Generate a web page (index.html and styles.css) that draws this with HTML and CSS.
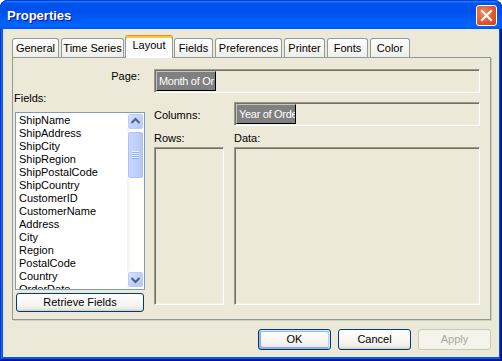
FILE: index.html
```html
<!DOCTYPE html>
<html>
<head>
<meta charset="utf-8">
<link rel="stylesheet" href="styles.css">
</head>
<body>
<div class="window">
  <div class="titlebar">
    <span class="title">Properties</span>
    <div class="close">
      <svg width="19" height="19" viewBox="0 0 19 19"><path d="M5 5 L14 14 M14 5 L5 14" stroke="#fff" stroke-width="2.2" stroke-linecap="square"/></svg>
    </div>
  </div>
  <div class="client">
    <div class="tabs">
      <div class="tab t-general">General</div>
      <div class="tab t-time">Time Series</div>
      <div class="tab sel t-layout">Layout</div>
      <div class="tab t-fields">Fields</div>
      <div class="tab t-pref">Preferences</div>
      <div class="tab t-printer">Printer</div>
      <div class="tab t-fonts">Fonts</div>
      <div class="tab t-color">Color</div>
    </div>
    <div class="panel">
      <div class="page-row">
        <span class="page-label">Page:</span>
        <div class="well page-well"><span class="chip">Month of Or</span></div>
      </div>
      <div class="main">
        <div class="left">
          <div class="fields-lbl">Fields:</div>
          <div class="listbox">
            <ul class="items">
              <li>ShipName</li>
              <li>ShipAddress</li>
              <li>ShipCity</li>
              <li>ShipRegion</li>
              <li>ShipPostalCode</li>
              <li>ShipCountry</li>
              <li>CustomerID</li>
              <li>CustomerName</li>
              <li>Address</li>
              <li>City</li>
              <li>Region</li>
              <li>PostalCode</li>
              <li>Country</li>
              <li>OrderDate</li>
            </ul>
            <div class="scrollbar">
              <div class="sb-btn">
                <svg width="15" height="15" viewBox="0 0 15 15"><path d="M3.5 9 L7.5 5 L11.5 9" fill="none" stroke="#4d6185" stroke-width="2"/></svg>
              </div>
              <div class="sb-thumb">
                <span class="grip"></span><span class="grip"></span><span class="grip"></span><span class="grip"></span>
              </div>
              <div class="sb-btn sb-down">
                <svg width="15" height="15" viewBox="0 0 15 15"><path d="M3.5 6 L7.5 10 L11.5 6" fill="none" stroke="#4d6185" stroke-width="2"/></svg>
              </div>
            </div>
          </div>
          <div class="btn retrieve">Retrieve Fields</div>
        </div>
        <div class="right">
          <div class="lbl col-lbl">Columns:</div>
          <div class="well col-well"><span class="chip">Year of Orde</span></div>
          <div class="lbl sub-lbl">Rows:</div>
          <div class="lbl sub-lbl">Data:</div>
          <div class="well box"></div>
          <div class="well box"></div>
        </div>
      </div>
    </div>
    <div class="buttons">
      <div class="btn dlg default">OK</div>
      <div class="btn dlg">Cancel</div>
      <div class="btn dlg disabled">Apply</div>
    </div>
  </div>
</div>
</body>
</html>
```
FILE: styles.css
```css
* { box-sizing: border-box; }
html, body { margin: 0; padding: 0; }
body {
  width: 502px;
  height: 361px;
  overflow: hidden;
  background: #ffffff;
  font-family: "Liberation Sans", Arial, sans-serif;
  font-size: 11px;
  color: #000;
}
.window {
  width: 502px;
  height: 361px;
  display: flex;
  flex-direction: column;
  background: #0058ee;
  border-radius: 8px 8px 0 0;
  box-shadow: inset -1px -1px #00138c, inset 1px 0 #0831d9, inset -2px -2px #001ea0, inset 2px 0 #166aee;
}
.titlebar {
  height: 29px;
  flex: none;
  display: flex;
  align-items: flex-start;
  justify-content: space-between;
  padding: 0 5px 0 7px;
  border-radius: 8px 8px 0 0;
  background: linear-gradient(180deg, #0997ff, #0053ee 8%, #0050ee 40%, #0062f8 80%, #0066ff 92%, #005bff 95%, #0050e6 100%);
  border-top: 1px solid #0831d9;
}
.title {
  margin-top: 7px;
  font-weight: bold;
  font-size: 13px;
  line-height: 16px;
  color: #fff;
  text-shadow: 1px 1px #0f1089;
}
.close {
  margin-top: 4px;
  width: 21px;
  height: 21px;
  border: 1px solid #fff;
  border-radius: 3px;
  background: radial-gradient(circle at 35% 35%, #ef8a64 0%, #e2582d 55%, #c8401a 100%);
  display: flex;
  align-items: center;
  justify-content: center;
}
.close svg { display: block; }
.client {
  flex: 1;
  margin: 0 3px 4px 3px;
  background: #ece9d8;
  display: flex;
  flex-direction: column;
}
.tabs {
  display: flex;
  align-items: flex-end;
  height: 22px;
  margin: 6px 0 0 9px;
  position: relative;
  z-index: 2;
}
.tab {
  height: 19px;
  margin-right: 2px;
  border: 1px solid #919b9c;
  border-bottom: none;
  border-radius: 3px 3px 0 0;
  background: linear-gradient(180deg, #fff, #fafaf9 26%, #f0f0ea 95%, #ecebe5);
  text-align: center;
  line-height: 18px;
  white-space: nowrap;
}
.tab.sel {
  height: 23px;
  margin: 0 1px -1px -1px;
  border-top: 1px solid #e68b2c;
  box-shadow: inset 0 2px #ffc83c;
  background: #fcfcfe;
  line-height: 18px;
}
.t-general { width: 47px; }
.t-time { width: 63px; }
.t-layout { width: 48px; }
.t-fields { width: 39px; }
.t-pref { width: 67px; }
.t-printer { width: 41px; }
.t-fonts { width: 41px; }
.t-color { width: 40px; }
.panel {
  height: 263px;
  margin: 0 8px 0 9px;
  border: 1px solid #919b9c;
  background: #ece9d8;
  box-shadow: 1px 1px 0 #d0cebf;
  display: flex;
  flex-direction: column;
  padding-right: 10px;
}
.page-row {
  display: flex;
  margin-top: 11px;
  height: 24px;
}
.page-label {
  width: 127px;
  text-align: right;
  line-height: 13px;
  margin-top: 1px;
}
.well {
  border: 1px solid;
  border-color: #9d9a8c #fff #fff #9d9a8c;
  box-shadow: inset 1px 1px #716f64, inset -1px -1px #f1efe2;
  padding: 1px;
  background: #ece9d8;
}
.page-well {
  flex: 1;
  margin-left: 14px;
}
.chip {
  display: block;
  width: 60px;
  height: 20px;
  background: #808080;
  color: #fff;
  border: 1px solid;
  border-color: #c8c6be #000 #000 #c8c6be;
  padding-left: 2px;
  line-height: 18px;
  letter-spacing: -0.3px;
  overflow: hidden;
  white-space: nowrap;
}
.main {
  display: flex;
  flex: 1;
}
.left {
  width: 132px;
  padding-left: 1px;
  display: flex;
  flex-direction: column;
}
.fields-lbl {
  height: 19px;
  line-height: 11px;
}
.listbox {
  margin-left: 1px;
  width: 130px;
  height: 178px;
  border: 1px solid #7f9db9;
  background: #fff;
  display: flex;
}
.items {
  flex: 1;
  list-style: none;
  margin: 0;
  padding: 1px 0 0 3px;
  overflow: hidden;
  line-height: 13px;
}
.items li { white-space: nowrap; }
.scrollbar {
  width: 17px;
  display: flex;
  flex-direction: column;
  background: linear-gradient(90deg, #f3f1ec, #fefefb 25%, #fefefb);
  padding: 0 0 1px 0;
}
.sb-btn {
  height: 17px;
  border: 1px solid #fff;
  border-radius: 3px;
  background: linear-gradient(135deg, #dce6fe, #c1d2fb 50%, #b4c8f6);
  box-shadow: inset 0 0 0 1px #bccdf4;
  display: flex;
  align-items: center;
  justify-content: center;
}
.sb-btn svg { display: block; }
.sb-down { margin-top: auto; }
.sb-thumb {
  margin-top: 1px;
  height: 48px;
  border: 1px solid #fff;
  border-radius: 3px;
  background: linear-gradient(90deg, #c9d7fc, #c0d1fb 50%, #b2c6f6);
  box-shadow: inset 0 0 0 1px #aec2f2;
  display: flex;
  flex-direction: column;
  align-items: center;
  justify-content: center;
}
.grip {
  display: block;
  width: 7px;
  height: 2px;
  border-top: 1px solid #eef4fe;
  border-bottom: 1px solid #8cb0f8;
}
.btn {
  border: 1px solid #003c74;
  border-radius: 3px;
  background: linear-gradient(180deg, #fff, #f4f3ee 70%, #ecebe6 86%, #d6d0c5);
  text-align: center;
  white-space: nowrap;
}
.retrieve {
  margin: 3px 0 0 2px;
  width: 128px;
  height: 19px;
  line-height: 17px;
}
.right {
  margin-left: 9px;
  flex: 1;
  display: grid;
  grid-template-columns: 70px 1fr;
  grid-template-rows: 24px 21px 158px;
  column-gap: 10px;
  margin-top: 9px;
}
.lbl { line-height: 13px; }
.col-lbl { align-self: center; margin-top: 2px; }
.sub-lbl { align-self: end; padding-bottom: 2px; }
.buttons {
  display: flex;
  justify-content: flex-end;
  gap: 7px;
  margin-top: 9px;
  padding-right: 8px;
}
.dlg {
  width: 73px;
  height: 21px;
  line-height: 19px;
}
.default {
  box-shadow: inset -1px 1px #cee7ff, inset 1px 2px #98b8ea, inset -2px 2px #bcd4f6, inset 1px -1px #89ade4, inset 2px -2px #89ade4;
}
.disabled {
  border-color: #c9c7ba;
  background: #f5f4ea;
  color: #aca899;
}
```
